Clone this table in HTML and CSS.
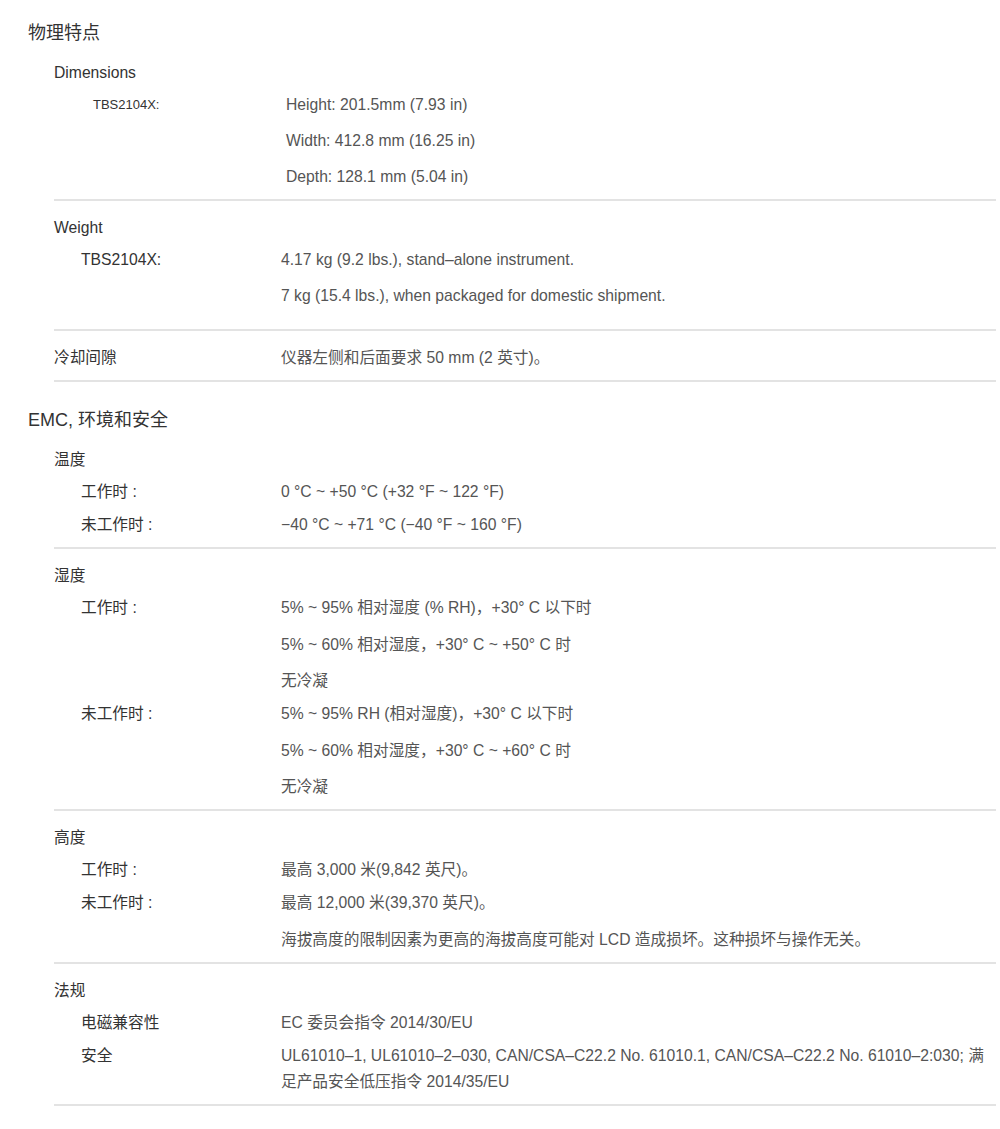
FILE: index.html
```html
<!DOCTYPE html>
<html lang="zh-CN">
<head>
  <meta charset="UTF-8">
  <title>规格</title>
  <link rel="stylesheet" href="styles.css">
</head>
<body>
  <div class="specs">

    <!-- 物理特点 -->
    <section class="spec-section">
      <h2>物理特点</h2>

      <div class="group group-dim">
        <div class="group-title">Dimensions</div>
        <div class="row">
          <div class="row-label">TBS2104X:</div>
          <div class="row-value">
            <p>Height: 201.5mm (7.93 in)</p>
            <p>Width: 412.8 mm (16.25 in)</p>
            <p>Depth: 128.1 mm (5.04 in)</p>
          </div>
        </div>
      </div>

      <div class="group group-weight">
        <div class="group-title">Weight</div>
        <div class="row">
          <div class="row-label">TBS2104X:</div>
          <div class="row-value">
            <p>4.17 kg (9.2 lbs.), stand–alone instrument.</p>
            <p>7 kg (15.4 lbs.), when packaged for domestic shipment.</p>
          </div>
        </div>
      </div>

      <div class="group group-flat">
        <div class="row">
          <div class="row-label">冷却间隙</div>
          <div class="row-value">
            <p>仪器左侧和后面要求 50 mm (2 英寸)。</p>
          </div>
        </div>
      </div>
    </section>

    <!-- EMC, 环境和安全 -->
    <section class="spec-section">
      <h2>EMC, 环境和安全</h2>

      <div class="group">
        <div class="group-title">温度</div>
        <div class="row">
          <div class="row-label">工作时 :</div>
          <div class="row-value"><p>0 °C ~ +50 °C (+32 °F ~ 122 °F)</p></div>
        </div>
        <div class="row">
          <div class="row-label">未工作时 :</div>
          <div class="row-value"><p>−40 °C ~ +71 °C (−40 °F ~ 160 °F)</p></div>
        </div>
      </div>

      <div class="group">
        <div class="group-title">湿度</div>
        <div class="row">
          <div class="row-label">工作时 :</div>
          <div class="row-value">
            <p>5% ~ 95% 相对湿度 (% RH)，+30° C 以下时</p>
            <p>5% ~ 60% 相对湿度，+30° C ~ +50° C 时</p>
            <p>无冷凝</p>
          </div>
        </div>
        <div class="row">
          <div class="row-label">未工作时 :</div>
          <div class="row-value">
            <p>5% ~ 95% RH (相对湿度)，+30° C 以下时</p>
            <p>5% ~ 60% 相对湿度，+30° C ~ +60° C 时</p>
            <p>无冷凝</p>
          </div>
        </div>
      </div>

      <div class="group">
        <div class="group-title">高度</div>
        <div class="row">
          <div class="row-label">工作时 :</div>
          <div class="row-value"><p>最高 3,000 米(9,842 英尺)。</p></div>
        </div>
        <div class="row">
          <div class="row-label">未工作时 :</div>
          <div class="row-value">
            <p>最高 12,000 米(39,370 英尺)。</p>
            <p>海拔高度的限制因素为更高的海拔高度可能对 LCD 造成损坏。这种损坏与操作无关。</p>
          </div>
        </div>
      </div>

      <div class="group">
        <div class="group-title">法规</div>
        <div class="row">
          <div class="row-label">电磁兼容性</div>
          <div class="row-value"><p>EC 委员会指令 2014/30/EU</p></div>
        </div>
        <div class="row">
          <div class="row-label">安全</div>
          <div class="row-value"><p>UL61010–1, UL61010–2–030, CAN/CSA–C22.2 No. 61010.1, CAN/CSA–C22.2 No. 61010–2:030; 满足产品安全低压指令 2014/35/EU</p></div>
        </div>
      </div>
    </section>

  </div>
</body>
</html>
```

FILE: styles.css
```css
body {
  margin: 0;
  padding: 20px 4px 0 28px;
  background-color: #fff;
  font-family: 'Liberation Sans', 'Noto Sans CJK SC', sans-serif;
  font-size: 15.7px;
  line-height: 26px;
  color: #333;
}
.spec-section + .spec-section {
  margin-top: 25px;
}
h2 {
  margin: 0;
  font-size: 18px;
  font-weight: normal;
  line-height: 26px;
  color: #333;
}
.group {
  margin-left: 26px;
  padding: 14px 0 9px 0;
  border-bottom: 2px solid #e3e3e3;
}
.group-title {
  margin-bottom: 6px;
}
.row {
  display: grid;
  grid-template-columns: 227px 1fr;
}
.row + .row {
  margin-top: 7px;
}
.row-label {
  padding-left: 27px;
}
.row-value {
  color: #555;
}
.row-value p {
  margin: 0;
}
.row-value p + p {
  margin-top: 10.5px;
}

/* Dimensions: label smaller and shifted */
.group-dim .row-label {
  padding-left: 39px;
  font-size: 13px;
}
.group-dim .row-value {
  padding-left: 5px;
}
.group-dim .row-value p + p,
.group-weight .row-value p + p {
  margin-top: 10px;
}
.group-weight {
  padding-bottom: 20px;
}
.group-flat .row-label {
  padding-left: 0;
}
```
